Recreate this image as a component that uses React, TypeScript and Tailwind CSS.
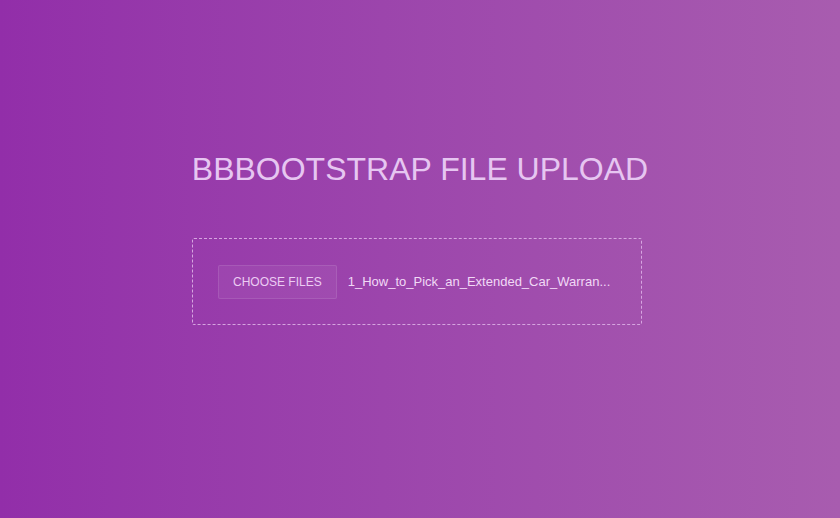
export default function App() {
  return (
    <div className="min-h-[518px] w-full bg-gradient-to-r from-[#922ea9] to-[#a85caf] font-['Liberation_Sans',Arial,sans-serif]">
      <div className="mx-auto flex w-[456px] flex-col pt-[151px]">
        <h1 className="-mx-10 whitespace-nowrap text-center text-[32px] font-normal leading-[37px] text-[#e6c6f1]">
          BBBOOTSTRAP FILE UPLOAD
        </h1>
        <div className="mt-[50px] flex h-[87px] w-[450px] items-center rounded-[2px] border border-dashed border-[#d6a5e0] px-[25px]">
          <button className="h-[34px] rounded-[2px] border border-white/10 bg-white/5 px-[14px] text-[12px] leading-none text-[#ecccf3]">
            CHOOSE FILES
          </button>
          <span className="ml-[11px] whitespace-nowrap text-[13px] text-[#f1d9f6]">
            1_How_to_Pick_an_Extended_Car_Warran...
          </span>
        </div>
      </div>
    </div>
  )
}
